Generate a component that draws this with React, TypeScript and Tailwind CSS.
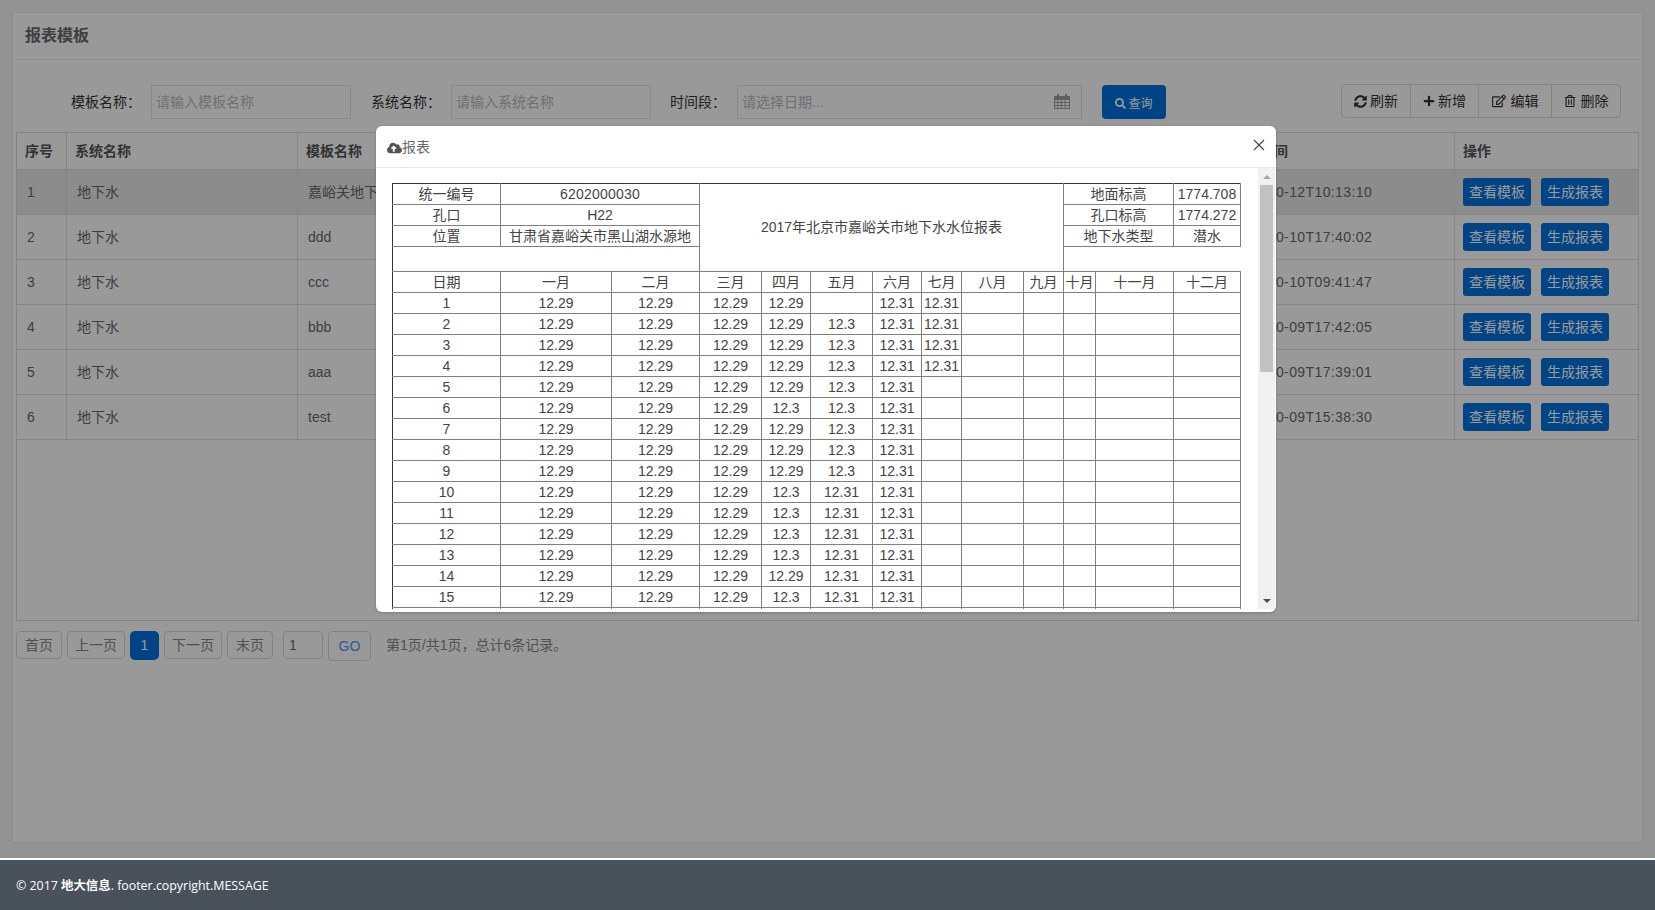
import React from "react";
import { FaSyncAlt, FaPlus, FaRegEdit, FaRegTrashAlt, FaSearch, FaCloudUploadAlt } from "react-icons/fa";

const FONT = "font-['Liberation_Sans','Noto_Sans_CJK_SC',sans-serif]";

const tableRows = [
  { no: 1, name: "嘉峪关地下水水位报表模板", time: "2017-10-12T10:13:10" },
  { no: 2, name: "ddd", time: "2017-10-10T17:40:02" },
  { no: 3, name: "ccc", time: "2017-10-10T09:41:47" },
  { no: 4, name: "bbb", time: "2017-10-09T17:42:05" },
  { no: 5, name: "aaa", time: "2017-10-09T17:39:01" },
  { no: 6, name: "test", time: "2017-10-09T15:38:30" },
];

const reportRows: string[][] = [
  ["1", "12.29", "12.29", "12.29", "12.29", "", "12.31", "12.31"],
  ["2", "12.29", "12.29", "12.29", "12.29", "12.3", "12.31", "12.31"],
  ["3", "12.29", "12.29", "12.29", "12.29", "12.3", "12.31", "12.31"],
  ["4", "12.29", "12.29", "12.29", "12.29", "12.3", "12.31", "12.31"],
  ["5", "12.29", "12.29", "12.29", "12.29", "12.3", "12.31", ""],
  ["6", "12.29", "12.29", "12.29", "12.3", "12.3", "12.31", ""],
  ["7", "12.29", "12.29", "12.29", "12.29", "12.3", "12.31", ""],
  ["8", "12.29", "12.29", "12.29", "12.29", "12.3", "12.31", ""],
  ["9", "12.29", "12.29", "12.29", "12.29", "12.3", "12.31", ""],
  ["10", "12.29", "12.29", "12.29", "12.3", "12.31", "12.31", ""],
  ["11", "12.29", "12.29", "12.29", "12.3", "12.31", "12.31", ""],
  ["12", "12.29", "12.29", "12.29", "12.3", "12.31", "12.31", ""],
  ["13", "12.29", "12.29", "12.29", "12.3", "12.31", "12.31", ""],
  ["14", "12.29", "12.29", "12.29", "12.29", "12.31", "12.31", ""],
  ["15", "12.29", "12.29", "12.29", "12.3", "12.31", "12.31", ""],
  ["", "", "", "", "", "", "", ""],
];

const months = ["一月", "二月", "三月", "四月", "五月", "六月", "七月", "八月", "九月", "十月", "十一月", "十二月"];
const colWidths = [108, 111, 88, 62, 49, 62, 49, 40, 62, 40, 32, 78, 67];

const cell = "border border-[#808080] p-0 text-center leading-[19px] whitespace-nowrap";
const dark = "border-l-[#333333]";
const darkTop = "border-t-[#333333]";

function ReportTable() {
  return (
    <table className="w-[849px] table-fixed border-collapse text-[14px] text-[#444444]">
      <colgroup>
        {colWidths.map((w, i) => (
          <col key={i} style={{ width: w }} />
        ))}
      </colgroup>
      <tbody>
        <tr className="h-[21px]">
          <td className={`${cell} ${dark} ${darkTop}`}>统一编号</td>
          <td className={`${cell} ${darkTop} tracking-[0.2px]`} colSpan={2}>6202000030</td>
          <td className={`${cell} ${darkTop}`} colSpan={7} rowSpan={4}>2017年北京市嘉峪关市地下水水位报表</td>
          <td className={`${cell} ${darkTop}`} colSpan={2}>地面标高</td>
          <td className={`${cell} ${darkTop}`}>1774.708</td>
        </tr>
        <tr className="h-[21px]">
          <td className={`${cell} ${dark}`}>孔口</td>
          <td className={cell} colSpan={2}>H22</td>
          <td className={cell} colSpan={2}>孔口标高</td>
          <td className={cell}>1774.272</td>
        </tr>
        <tr className="h-[21px]">
          <td className={`${cell} ${dark}`}>位置</td>
          <td className={cell} colSpan={2}>甘肃省嘉峪关市黑山湖水源地</td>
          <td className={cell} colSpan={2}>地下水类型</td>
          <td className={cell}>潜水</td>
        </tr>
        <tr className="h-[25px]">
          <td className={`${cell} ${dark}`} colSpan={3}></td>
          <td className={`${cell} border-r-transparent`} colSpan={3}></td>
        </tr>
        <tr className="h-[21px]">
          <td className={`${cell} ${dark}`}>日期</td>
          {months.map((m) => (
            <td key={m} className={cell}>{m}</td>
          ))}
        </tr>
        {reportRows.map((r, i) => (
          <tr key={i} className="h-[21px]">
            {r.map((v, j) => (
              <td key={j} className={j === 0 ? `${cell} ${dark}` : cell}>{v}</td>
            ))}
            {months.slice(7).map((m) => (
              <td key={m} className={cell}></td>
            ))}
          </tr>
        ))}
      </tbody>
    </table>
  );
}

function Modal() {
  return (
    <div className="absolute left-[376px] top-[126px] z-20 flex h-[486px] w-[900px] flex-col overflow-hidden rounded-[6px] bg-white shadow-[0_1px_3px_rgba(0,0,0,0.2)]">
      <div className="flex h-[42px] shrink-0 items-center justify-between border-b border-[#e5e5e5] pl-[11px] pr-[11px] text-[14px] text-[#676a6c]">
        <div className="mt-[2px] flex items-center">
          <FaCloudUploadAlt className="h-[14px] w-[15px] text-[#555555]" />
          <span>报表</span>
        </div>
        <svg width="12" height="12" viewBox="0 0 12 12" className="mb-[3px] text-[#444444]" fill="none" stroke="currentColor" strokeWidth="1.1">
          <path d="M1 1L11 11M11 1L1 11" />
        </svg>
      </div>
      <div className="flex h-[441px] min-h-0 shrink-0">
        <div className="h-full flex-1 overflow-hidden pl-[16px] pt-[15px]">
          <ReportTable />
        </div>
        <div className="mr-px flex h-full w-[17px] shrink-0 flex-col items-center bg-[#f1f1f1]">
          <div className="flex h-[17px] w-full shrink-0 items-center justify-center">
            <div className="h-0 w-0 border-x-[4px] border-b-[4px] border-x-transparent border-b-[#a3a3a3]" />
          </div>
          <div className="h-[187px] w-[13px] bg-[#c1c1c1]" />
          <div className="flex-1" />
          <div className="flex h-[17px] w-full shrink-0 items-center justify-center">
            <div className="h-0 w-0 border-x-[4px] border-t-[4px] border-x-transparent border-t-[#505050]" />
          </div>
        </div>
      </div>
    </div>
  );
}

function CalendarIcon() {
  return (
    <svg width="16" height="16" viewBox="0 0 16 16" className="mb-[2px] text-[#a0a0a0]" fill="currentColor">
      <path fillRule="evenodd" d="M0 3h3V1h2v2h6V1h2v2h3v13H0V3zm1 4v2h2.500V7H1zm3.500 0v2H7V7H4.500zM8 7v2h2.500V7H8zm3.500 0v2H15V7h-3.500zM1 10v2h2.500v-2H1zm3.500 0v2H7v-2H4.500zM8 10v2h2.500v-2H8zm3.500 0v2H15v-2h-3.500zM1 13v2h2.500v-2H1zm3.500 0v2H7v-2H4.500zM8 13v2h2.500v-2H8zm3.500 0v2H15v-2h-3.500z" />
    </svg>
  );
}

const inputClass =
  "h-[34px] border border-[#e5e6e7] bg-white px-[4px] text-[14px] text-[#676a6c] outline-none placeholder:text-[#bbbbbb]";

function FilterBar() {
  return (
    <div className="mt-[24px] flex h-[35px] items-start justify-between pr-[18px]">
      <div className="ml-[55px] mt-px flex items-center text-[14px] text-[#333333]">
        <label className="w-[70px]">模板名称：</label>
        <input className={`${inputClass} ml-[10px] w-[200px]`} placeholder="请输入模板名称" />
        <label className="ml-[20px] w-[70px]">系统名称：</label>
        <input className={`${inputClass} ml-[10px] w-[200px]`} placeholder="请输入系统名称" />
        <label className="ml-[19px] w-[56px]">时间段：</label>
        <div className={`${inputClass} ml-[11px] flex w-[345px] items-center justify-between pr-[11px]`}>
          <span className="text-[#bbbbbb]">请选择日期...</span>
          <CalendarIcon />
        </div>
        <button className="ml-[20px] flex h-[34px] w-[64px] items-center justify-center rounded-[4px] bg-[#0072e0] text-[12px] text-white">
          <FaSearch className="mr-[2px] mt-[2px] h-[11px] w-[11px]" />
          <span className="mt-[3px]">查询</span>
        </button>
      </div>
      <div className="flex h-[34px] items-center rounded-[4px] border border-[#dddddd] bg-white text-[14px] text-[#333333]">
        <div className="flex h-full w-[69px] items-center justify-center gap-[3px] border-r border-[#dddddd]">
          <FaSyncAlt className="h-[13px] w-[13px]" />
          <span>刷新</span>
        </div>
        <div className="flex h-full w-[68px] items-center justify-center gap-[3px] border-r border-[#dddddd]">
          <FaPlus className="h-[12px] w-[12px]" />
          <span>新增</span>
        </div>
        <div className="flex h-full w-[73px] items-center justify-center gap-[5px] border-r border-[#dddddd]">
          <FaRegEdit className="h-[14px] w-[14px]" />
          <span>编辑</span>
        </div>
        <div className="flex h-full w-[68px] items-center justify-center gap-[5px]">
          <FaRegTrashAlt className="h-[12px] w-[12px]" />
          <span>删除</span>
        </div>
      </div>
    </div>
  );
}

function DataTable() {
  const th = "h-[37px] border-b border-l border-[#dddddd] pl-[8px] text-left align-middle font-bold text-[#555555] first:border-l-0";
  const td = "h-[45px] border-b border-l border-[#e0e0e0] pl-[10px] align-middle first:border-l-0";
  return (
    <div className="mt-[13px] h-[489px] border border-[#dddddd] bg-white">
      <table className="w-full table-fixed border-separate border-spacing-0 text-[14px] text-[#676a6c]">
        <colgroup>
          <col className="w-[49px]" />
          <col className="w-[231px]" />
          <col className="w-[300px]" />
          <col className="w-[300px]" />
          <col className="w-[326px]" />
          <col className="w-[231px]" />
          <col />
        </colgroup>
        <thead>
          <tr>
            <th className={th}>序号</th>
            <th className={th}>系统名称</th>
            <th className={th}>模板名称</th>
            <th className={th}>字段一</th>
            <th className={th}>字段二</th>
            <th className={th}>创建时间</th>
            <th className={th}>操作</th>
          </tr>
        </thead>
        <tbody>
          {tableRows.map((r) => (
            <tr key={r.no} className={r.no === 1 ? "bg-[#e9e9e9]" : ""}>
              <td className={td}>{r.no}</td>
              <td className={td}>地下水</td>
              <td className={`${td} whitespace-nowrap overflow-hidden`}>{r.name}</td>
              <td className={td}></td>
              <td className={td}></td>
              <td className={`${td} !pl-[6px] tracking-[0.39px]`}>{r.time}</td>
              <td className={`${td} !pl-[8px]`}>
                <div className="flex gap-[10px]">
                  <button className="h-[28px] w-[68px] rounded-[3px] bg-[#0072e0] text-[14px] text-white">查看模板</button>
                  <button className="h-[28px] w-[68px] rounded-[3px] bg-[#0072e0] text-[14px] text-white">生成报表</button>
                </div>
              </td>
            </tr>
          ))}
        </tbody>
      </table>
    </div>
  );
}

function Pagination() {
  const b = "flex h-[28px] items-center justify-center rounded-[4px] border border-[#dddddd] bg-white text-[14px] text-[#888888]";
  return (
    <div className="mt-[10px] flex items-start text-[14px]">
      <div className={`${b} w-[46px]`}>首页</div>
      <div className={`${b} ml-[5px] w-[58px]`}>上一页</div>
      <div className="ml-[5px] flex h-[29px] w-[29px] items-center justify-center rounded-[5px] bg-[#0072e0] text-white">1</div>
      <div className={`${b} ml-[5px] w-[58px]`}>下一页</div>
      <div className={`${b} ml-[5px] w-[46px]`}>末页</div>
      <div className="ml-[10px] flex h-[28px] w-[40px] items-center rounded-[4px] border border-[#dddddd] bg-white pl-[5px] text-[#676a6c]">1</div>
      <div className="ml-[5px] flex h-[30px] w-[43px] items-center justify-center rounded-[4px] border border-[#dddddd] bg-white pt-[1px] text-[#4b96fa]">GO</div>
      <div className="ml-[15px] mt-[4px] text-[#888888]">第1页/共1页，总计6条记录。</div>
    </div>
  );
}

export default function App() {
  return (
    <div className={`relative flex h-[910px] w-[1655px] flex-col overflow-hidden bg-[#f3f3f4] ${FONT}`}>
      <main className="flex min-h-0 flex-1 flex-col p-[12px] pb-[15px]">
        <section className="h-[831px] border border-[#e7eaec] bg-white px-[3px]">
          <div className="flex h-[47px] items-center border-b border-[#e7eaec] pl-[9px] text-[16px] font-bold text-[#676a6c]">
            报表模板
          </div>
          <FilterBar />
          <DataTable />
          <Pagination />
        </section>
      </main>
      <div className="absolute inset-0 z-10 bg-black/40" />
      <footer className="relative z-20 flex h-[52px] shrink-0 items-center border-t-2 border-white bg-[#49525a] pl-[16px] pt-[2px] font-['Open_Sans','Noto_Sans_CJK_SC',sans-serif] text-[12.4px] text-white">
        <span>
          © 2017 <strong>地大信息</strong>. footer.copyright.MESSAGE
        </span>
      </footer>
      <Modal />
    </div>
  );
}
